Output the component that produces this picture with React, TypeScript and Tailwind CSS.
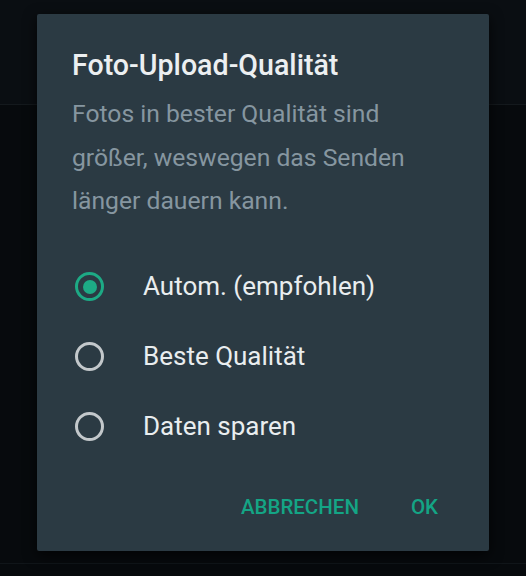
import React, { useState } from "react";

const options = ["Autom. (empfohlen)", "Beste Qualität", "Daten sparen"];

export default function App() {
  const [sel, setSel] = useState(0);
  return (
    <div
      className="relative w-[526px] h-[576px] bg-[#070a0d] flex flex-col overflow-hidden"
      style={{ fontFamily: "Roboto, 'Noto Sans', sans-serif" }}
    >
      {/* background app behind the dialog */}
      <div className="h-[105px] bg-[#0a0e12] border-b border-[#14191d]" />
      <div className="flex-1" />
      <div className="h-[13px] border-t border-[#101519]" />

      {/* dialog overlay */}
      <div className="absolute left-[37px] top-[14px] w-[452px] h-[537px] bg-[#2b3a43] rounded-[2px] shadow-[0_4px_14px_rgba(0,0,0,0.7)] flex flex-col">
        <div className="pt-[33px] pl-[35px] pr-[20px]">
          <h1 className="text-[28.6px] leading-[36px] font-medium text-[#eceff1]">
            Foto-Upload-Qualität
          </h1>
          <p className="mt-[9px] text-[24.7px] leading-[43.5px] text-[#8696a0] whitespace-nowrap">
            Fotos in bester Qualität sind
            <br />
            größer, weswegen das Senden
            <br />
            länger dauern kann.
          </p>
        </div>
        <div className="mt-[29px] flex flex-col">
          {options.map((o, i) => (
            <button
              key={o}
              onClick={() => setSel(i)}
              className="h-[70px] flex items-center pl-[38px] text-left"
            >
              <span
                className={
                  i === sel
                    ? "w-[29px] h-[29px] rounded-full border-[3px] border-[#1daa85] flex items-center justify-center shrink-0"
                    : "w-[29px] h-[29px] rounded-full border-[3px] border-[#c3c8cb] flex items-center justify-center shrink-0"
                }
              >
                {i === sel && <span className="w-[14px] h-[14px] rounded-full bg-[#1daa85]" />}
              </span>
              <span className="ml-[39px] text-[26px] text-[#e9edef]">{o}</span>
            </button>
          ))}
        </div>
        <div className="mt-auto mb-[32px] flex justify-end items-center pr-[51px] gap-[52px]">
          <span className="text-[20.5px] leading-[24px] font-medium text-[#14a585]">ABBRECHEN</span>
          <span className="text-[20.5px] leading-[24px] font-medium text-[#14a585]">OK</span>
        </div>
      </div>
    </div>
  );
}
